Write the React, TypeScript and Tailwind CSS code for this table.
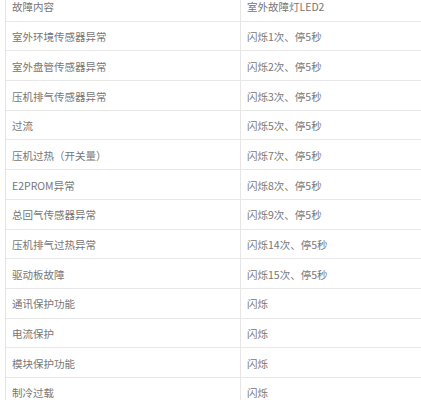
const rows: [string, string][] = [
  ['故障内容', '室外故障灯LED2'],
  ['室外环境传感器异常', '闪烁1次、停5秒'],
  ['室外盘管传感器异常', '闪烁2次、停5秒'],
  ['压机排气传感器异常', '闪烁3次、停5秒'],
  ['过流', '闪烁5次、停5秒'],
  ['压机过热（开关量）', '闪烁7次、停5秒'],
  ['E2PROM异常', '闪烁8次、停5秒'],
  ['总回气传感器异常', '闪烁9次、停5秒'],
  ['压机排气过热异常', '闪烁14次、停5秒'],
  ['驱动板故障', '闪烁15次、停5秒'],
  ['通讯保护功能', '闪烁'],
  ['电流保护', '闪烁'],
  ['模块保护功能', '闪烁'],
  ['制冷过载', '闪烁'],
];

export default function App() {
  return (
    <div className="h-[400px] w-[421px] overflow-hidden bg-white">
      <div
        className="ml-[5px] mt-[-8px] w-[416px] border-l border-[#e4e4e4] text-[10.5px] text-[#767676]"
        style={{ fontFamily: '"Noto Sans CJK SC", "Noto Sans", sans-serif' }}
      >
        {rows.map(([fault, led]) => (
          <div key={fault} className="flex h-[29.7px] border-b border-[#e8e8e8]">
            <div className="flex w-[234px] items-center pl-[6px] pt-[2px]">{fault}</div>
            <div className="flex flex-1 items-center border-l border-[#e6e6e6] pl-[6px] pt-[2px]">{led}</div>
          </div>
        ))}
      </div>
    </div>
  );
}
